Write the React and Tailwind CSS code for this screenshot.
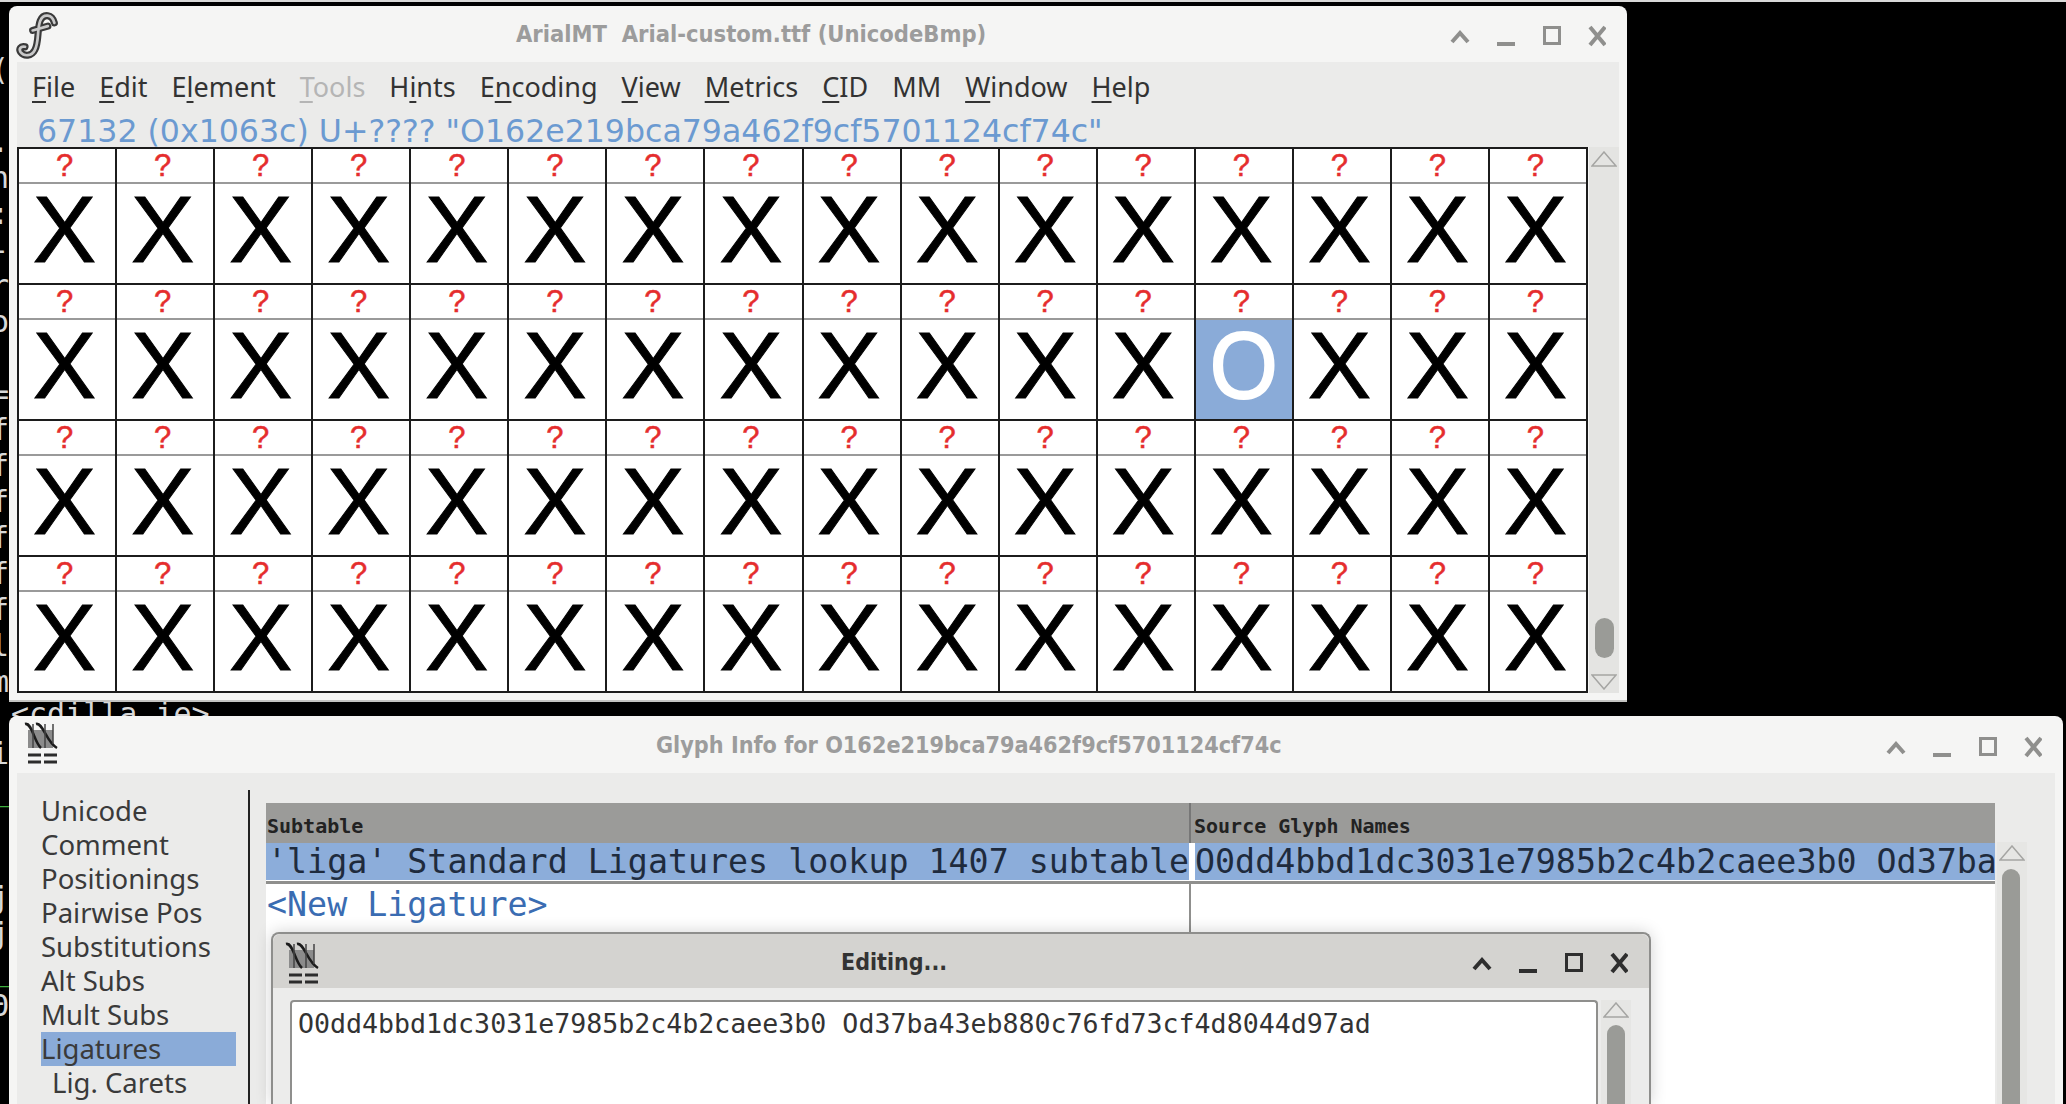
import React from 'react';

const UI_FONT = 'font-["Noto_Sans",sans-serif]';
const MONO_FONT = 'font-["DejaVu_Sans_Mono",monospace]';

const MENU = [
  ['', 'F', 'ile'],
  ['', 'E', 'dit'],
  ['E', 'l', 'ement'],
  ['', 'T', 'ools', true],
  ['H', 'i', 'nts'],
  ['E', 'n', 'coding'],
  ['', 'V', 'iew'],
  ['', 'M', 'etrics'],
  ['', 'C', 'ID'],
  ['MM', '', ''],
  ['', 'W', 'indow'],
  ['', 'H', 'elp'],
];

const SIDEBAR = [
  'Unicode',
  'Comment',
  'Positionings',
  'Pairwise Pos',
  'Substitutions',
  'Alt Subs',
  'Mult Subs',
  'Ligatures',
  'Lig. Carets',
];

// what peeks out from the terminal behind the windows, one entry per 36px line
const TERMINAL = [
  '(', '', '.', 'n', ':', '-', 'r', 'o', '', '=',
  'f', 'f', 'f', 'f', 'f', 'f', 'l', 'm', '', 'i', '_', '', '', 'j', 'j', '_', 'Θ',
];

function TitleButtons({ color = '#8f8f8d' }) {
  return (
    <svg width="156" height="24" viewBox="0 0 156 24" fill="none" stroke={color} className="shrink-0 mt-[4px]">
      <path d="M2 18 L10 9 L18 18" strokeWidth="4" />
      <path d="M47 20 H65" strokeWidth="4" />
      <rect x="94.5" y="3.5" width="15" height="16" strokeWidth="3" />
      <path d="M140 3 L155 21 M155 3 L140 21" strokeWidth="4" />
    </svg>
  );
}

function ScrollArrow({ down = false, className = '' }) {
  return (
    <svg width="26" height="16" viewBox="0 0 26 16" fill="none" stroke="#a5a5a3" strokeWidth="1.5" className={className}>
      {down ? <path d="M1 1 H25 L13 15 Z" /> : <path d="M1 15 H25 L13 1 Z" />}
    </svg>
  );
}

function FontForgeLogo() {
  const d = 'M51 22 C49 14 41 13 38 20 C35 27 37 40 33 47 C30 53 23 53 20 49 C18 46 20 43 24 44 M31 29 L45 25';
  return (
    <svg width="50" height="56" viewBox="12 10 46 50" fill="none" className="absolute left-[3px] top-[3px]">
      <path d={d} stroke="#3a3a3a" strokeWidth="6.5" strokeLinecap="round" />
      <path d={d} stroke="#c9c9c9" strokeWidth="2.5" strokeLinecap="round" />
    </svg>
  );
}

function GlyphInfoIcon({ className = '' }) {
  return (
    <svg width="36" height="44" viewBox="0 0 36 44" fill="none" className={className}>
      <rect x="4" y="8" width="25" height="18" fill="#8b8b8b" />
      <path d="M1 2 C8 0 10 20 17 26 M12 2 C19 0 22 20 33 26" stroke="#1c1c1c" strokeWidth="2.5" />
      <path d="M9 2 V26 M21 2 V26 M29 2 V22" stroke="#444" strokeWidth="1.5" />
      <path d="M4 33 H17 M20 33 H33 M4 40 H17 M20 40 H33" stroke="#2c2c2c" strokeWidth="3" />
    </svg>
  );
}

function GlyphCell({ selected }) {
  return (
    <div className="flex flex-col border-r-2 border-b-2 border-[#1c1c1c] min-w-0">
      <div className='h-[35px] shrink-0 pr-[5px] flex items-center justify-center border-b-2 border-[#9a9a9a] bg-white text-[#e52d2d] text-[31px] leading-none font-["Liberation_Sans",sans-serif] [-webkit-text-stroke:0.5px_#e52d2d]'>
        ?
      </div>
      <div
        className={
          'flex-1 pr-[5px] pb-[8px] flex items-center justify-center overflow-hidden text-[95px] leading-[85px] font-["Liberation_Sans",sans-serif] ' +
          (selected ? 'bg-[#8aabd8] text-white [-webkit-text-stroke:2px_white]' : 'bg-white text-black [-webkit-text-stroke:1px_black]')
        }
      >
        {selected ? <span className="pl-[5px] scale-x-[0.92]">O</span> : 'X'}
      </div>
    </div>
  );
}

function GlyphGrid() {
  const cells = Array.from({ length: 64 }, (_, i) => i);
  return (
    <div className="w-[1571px] h-[546px] grid grid-cols-[repeat(16,minmax(0,1fr))] grid-rows-4 border-t-2 border-l-2 border-[#1c1c1c]">
      {cells.map((i) => (
        <GlyphCell key={i} selected={i === 28} />
      ))}
    </div>
  );
}

function FontWindow() {
  return (
    <div className={`absolute left-[9px] top-[6px] w-[1618px] h-[696px] rounded-t-lg bg-[#f5f5f4] border-b-2 border-[#c4c4c2] ${UI_FONT}`}>
      <FontForgeLogo />
      <div className="h-[56px] pl-[507px] pr-[21px] flex items-center justify-between">
        <span className='mt-[2px] text-[#9c9c9c] text-[23.5px] font-bold [font-stretch:condensed] font-["DejaVu_Sans",sans-serif] whitespace-pre'>
          ArialMT  Arial-custom.ttf (UnicodeBmp)
        </span>
        <TitleButtons />
      </div>
      <div className="mx-[8px] h-[85px] bg-[#ebebea]">
        <div className="h-[50px] pl-[15px] flex items-center gap-[24px] text-[27px] text-[#333]">
          {MENU.map(([before, key, after, disabled], i) => (
            <span key={i} className={disabled ? 'text-[#b5b5b5]' : ''}>
              {before}
              <span className="underline underline-offset-4 decoration-2">{key}</span>
              {after}
            </span>
          ))}
        </div>
        <div className='h-[35px] pl-[20px] pt-[3px] overflow-hidden text-[#6b9ad1] text-[31.6px] leading-[32px] whitespace-pre font-["DejaVu_Sans",sans-serif]'>
          {'67132 (0x1063c) U+???? "O162e219bca79a462f9cf5701124cf74c"'}
        </div>
      </div>
      <div className="flex pl-[8px]">
        <GlyphGrid />
        <div className="relative w-[30px] h-[546px] ml-[1px] bg-[#e4e4e2]">
          <ScrollArrow className="absolute left-[2px] top-[4px]" />
          <div className="absolute left-[6px] top-[471px] w-[19px] h-[40px] rounded-full bg-[#9a9b97]" />
          <ScrollArrow down className="absolute left-[2px] top-[527px]" />
        </div>
      </div>
    </div>
  );
}

function GlyphInfoWindow() {
  return (
    <div className={`absolute left-[9px] top-[716px] w-[2054px] h-[388px] rounded-t-lg bg-[#f5f5f4] ${UI_FONT}`}>
      <GlyphInfoIcon className="absolute left-[15px] top-[6px]" />
      <div className="h-[57px] pl-[647px] pr-[21px] flex items-center justify-between">
        <span className='mt-[2px] text-[#9c9c9c] text-[23.2px] font-bold [font-stretch:condensed] font-["DejaVu_Sans",sans-serif] whitespace-pre'>
          Glyph Info for O162e219bca79a462f9cf5701124cf74c
        </span>
        <TitleButtons />
      </div>
      <div className="mx-[8px] h-[331px] bg-[#ebebea] flex">
        <div className="w-[233px] shrink-0 mt-[17px] border-r-2 border-[#222] pl-[24px] pr-[12px] pt-[4px] text-[27.5px] text-[#3a3a3a]">
          {SIDEBAR.map((item) => (
            <div
              key={item}
              className={
                'h-[34px] leading-[34px] whitespace-nowrap ' +
                (item === 'Ligatures' ? 'bg-[#8aabd8] ' : '') +
                (item === 'Lig. Carets' ? 'pl-[11px]' : '')
              }
            >
              {item}
            </div>
          ))}
        </div>
        <div className={`flex-1 min-w-0 pt-[30px] pl-[16px] flex ${MONO_FONT}`}>
          <div className="w-[1729px] h-full bg-white">
            <div className="h-[40px] bg-[#9b9b99] flex text-[20px] font-bold text-[#222] items-end leading-[34px]">
              <div className="w-[925px] border-r-2 border-[#777] h-full pl-[1px] pt-[6px]">Subtable</div>
              <div className="pl-[3px] h-full pt-[6px]">Source Glyph Names</div>
            </div>
            <div className="h-[41px] flex border-b-[3px] border-[#8f8f8d] text-[33.3px] leading-[37px] text-[#1f2b3d] whitespace-pre overflow-hidden">
              <div className="w-[923px] shrink-0 h-[37px] bg-[#8cadda] pl-[1px] overflow-hidden">{"'liga' Standard Ligatures lookup 1407 subtable"}</div>
              <div className="w-[6px] shrink-0 bg-white" />
              <div className="flex-1 min-w-0 h-[37px] bg-[#8cadda] overflow-hidden">O0dd4bbd1dc3031e7985b2c4b2caee3b0 Od37ba43eb880c76fd73cf4d8044d97ad</div>
            </div>
            <div className="h-[48px] flex text-[33.3px] leading-[42px] text-[#3a6cb2]">
              <div className="w-[925px] border-r-2 border-[#8f8f8d] pl-[1px]">{'<New Ligature>'}</div>
            </div>
          </div>
          <div className="relative w-[30px] h-full mt-[39px] ml-[2px] bg-[#e6e6e4]">
            <ScrollArrow className="absolute left-[2px] top-[3px]" />
            <div className="absolute left-[5px] top-[27px] bottom-0 w-[18px] rounded-t-full bg-[#9a9b97]" />
          </div>
        </div>
      </div>
    </div>
  );
}

function EditingWindow() {
  return (
    <div className={`absolute left-[271px] top-[932px] w-[1380px] h-[172px] rounded-t-lg bg-[#ececeb] border-t-2 border-x-2 border-[#8e8e8c] shadow-[0_0_16px_rgba(0,0,0,0.18)] ${UI_FONT}`}>
      <GlyphInfoIcon className="absolute left-[12px] top-[8px]" />
      <div className="h-[54px] bg-[#d4d3d0] rounded-t-lg pl-[568px] pr-[21px] flex items-center justify-between">
        <span className='mt-[3px] text-[#333] text-[23px] font-bold [font-stretch:condensed] font-["DejaVu_Sans",sans-serif]'>
          Editing...
        </span>
        <TitleButtons color="#2e2e2e" />
      </div>
      <div className="flex pt-[12px] pl-[17px] h-[116px]">
        <div className={`w-[1308px] h-full bg-white border-t-2 border-x-2 border-[#8f8f8d] rounded-t pl-[6px] pt-[6px] text-[26.6px] leading-[32px] text-[#333] whitespace-pre ${MONO_FONT}`}>
          O0dd4bbd1dc3031e7985b2c4b2caee3b0 Od37ba43eb880c76fd73cf4d8044d97ad
        </div>
        <div className="relative w-[30px] h-full ml-[3px] bg-[#e6e6e4]">
          <ScrollArrow className="absolute left-[2px] top-[2px]" />
          <div className="absolute left-[6px] top-[25px] bottom-0 w-[18px] rounded-t-full bg-[#9a9b97]" />
        </div>
      </div>
    </div>
  );
}

function TerminalBehind() {
  return (
    <>
      <div className={`absolute left-0 top-[52px] w-[9px] overflow-hidden text-[30px] text-[#d8d8d8] ${MONO_FONT}`}>
        {TERMINAL.map((ch, i) => (
          <div key={i} className={'h-[36px] leading-[36px] flex justify-end ' + (ch === '_' ? 'text-[#3fae3f]' : '')}>
            {ch}
          </div>
        ))}
      </div>
      <div className={`absolute left-[11px] top-[696px] text-[30px] leading-[36px] text-[#d8d8d8] ${MONO_FONT}`}>
        {'<cdilla.ie>'}
      </div>
    </>
  );
}

export default function App() {
  return (
    <div className="relative w-[2066px] h-[1104px] bg-black overflow-hidden">
      <div className="h-[2px] bg-[#d8d8d8]" />
      <TerminalBehind />
      <FontWindow />
      <GlyphInfoWindow />
      <EditingWindow />
    </div>
  );
}
